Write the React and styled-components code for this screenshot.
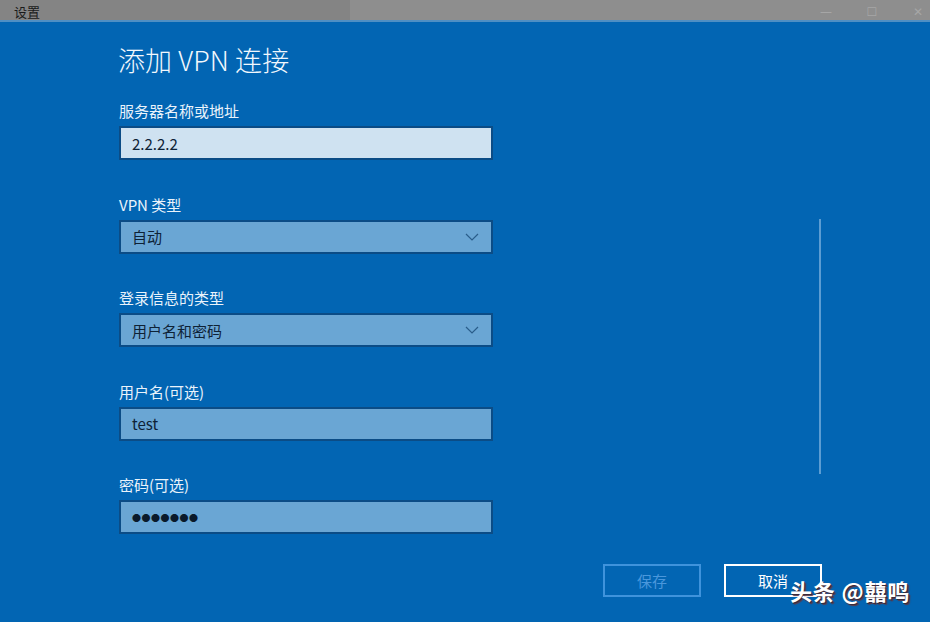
import React from "react";
import styled, { createGlobalStyle } from "styled-components";

const Global = createGlobalStyle`
  html, body { margin: 0; padding: 0; }
  body {
    width: 930px; height: 622px; overflow: hidden;
    background: #0265b3;
    font-family: "Noto Sans CJK SC", "Noto Sans", sans-serif;
  }
`;

const Window = styled.div`
  position: relative;
  width: 930px;
  height: 622px;
  display: flex;
  flex-direction: column;
  background: #0265b3;
  overflow: hidden;
`;

const TitleBar = styled.div`
  flex-shrink: 0;
  height: 20px;
  display: flex;
  border-bottom: 2px solid #4f8fc4;
  overflow: hidden;
`;

const TitleLeft = styled.div`
  width: 350px;
  background: #848484;
  padding: 4px 0 0 14px;
  box-sizing: border-box;
  font-size: 13px;
  line-height: 16px;
  color: #1a1a1a;
`;

const TitleRight = styled.div`
  flex: 1;
  background: #8e8e8e;
  display: flex;
  justify-content: flex-end;
  align-items: center;
  gap: 34px;
  padding: 4px 6px 0 0;
  color: #a6a6a6;
  font-size: 12px;
`;

const Ctrl = styled.span`
  width: 12px;
  text-align: center;
  font-family: "DejaVu Sans", sans-serif;
`;

const Body = styled.div`
  flex: 1;
  min-height: 0;
  display: flex;
`;

const Form = styled.div`
  width: 374px;
  padding: 18px 0 0 119px;
  display: flex;
  flex-direction: column;
`;

const Heading = styled.h1`
  margin: 0 0 21px -1px;
  font-size: 27px;
  font-weight: 300;
  line-height: 40px;
  color: #f2f8fd;
  letter-spacing: 0.1px;
`;

const Field = styled.div`
  display: flex;
  flex-direction: column;
  margin-bottom: 34.5px;
`;

const Label = styled.label`
  font-size: 15px;
  line-height: 20px;
  color: #eaf3fb;
  margin-bottom: 5px;
`;

const Box = styled.div`
  height: 34px;
  box-sizing: border-box;
  border: 2px solid #0b4c86;
  background: ${(p) => (p.$active ? "#cfe2f1" : "#6aa6d4")};
  display: flex;
  align-items: center;
  justify-content: space-between;
  padding: 0 12px 0 11px;
  font-size: 15px;
  color: #0e2236;
`;

const Dots = styled.span`
  font-size: 9px;
  letter-spacing: 0.5px;
  color: #0a1a2b;
`;

const Side = styled.div`
  flex: 1;
  display: flex;
  justify-content: flex-end;
  padding-right: 109px;
`;

const ScrollTrack = styled.div`
  width: 2px;
  height: 255px;
  margin-top: 197px;
  background: #5c9dd3;
`;

const Footer = styled.div`
  flex-shrink: 0;
  display: flex;
  justify-content: flex-end;
  gap: 23px;
  padding: 0 108px 25px 0;
`;

const Button = styled.div`
  width: 98px;
  height: 33px;
  box-sizing: border-box;
  border: 2px solid ${(p) => (p.$disabled ? "#3f93dc" : "#ffffff")};
  color: ${(p) => (p.$disabled ? "#4a97dc" : "#ffffff")};
  display: flex;
  align-items: center;
  justify-content: center;
  font-size: 15px;
`;

const Watermark = styled.div`
  position: absolute;
  right: 20px;
  bottom: 16px;
  font-size: 22px;
  font-weight: 700;
  color: #ffffff;
  text-shadow: 1px 1px 0 #3a2a3a, 2px 2px 1px #5a3a4a;
  letter-spacing: 0.8px;
`;

const Chevron = () => (
  <svg width="14" height="8" viewBox="0 0 14 8">
    <path d="M1 1 L7 7 L13 1" fill="none" stroke="#2a5d8a" strokeWidth="1.2" />
  </svg>
);

export default function App() {
  return (
    <Window>
      <Global />
      <TitleBar>
        <TitleLeft>设置</TitleLeft>
        <TitleRight>
          <Ctrl>—</Ctrl>
          <Ctrl>☐</Ctrl>
          <Ctrl>✕</Ctrl>
        </TitleRight>
      </TitleBar>
      <Body>
        <Form>
          <Heading>添加 VPN 连接</Heading>
          <Field>
            <Label>服务器名称或地址</Label>
            <Box $active>2.2.2.2</Box>
          </Field>
          <Field>
            <Label>VPN 类型</Label>
            <Box>
              自动
              <Chevron />
            </Box>
          </Field>
          <Field>
            <Label>登录信息的类型</Label>
            <Box>
              用户名和密码
              <Chevron />
            </Box>
          </Field>
          <Field>
            <Label>用户名(可选)</Label>
            <Box>test</Box>
          </Field>
          <Field>
            <Label>密码(可选)</Label>
            <Box>
              <Dots>●●●●●●●</Dots>
            </Box>
          </Field>
        </Form>
        <Side>
          <ScrollTrack />
        </Side>
      </Body>
      <Footer>
        <Button $disabled>保存</Button>
        <Button>取消</Button>
      </Footer>
      <Watermark>头条 @囍鸣</Watermark>
    </Window>
  );
}
